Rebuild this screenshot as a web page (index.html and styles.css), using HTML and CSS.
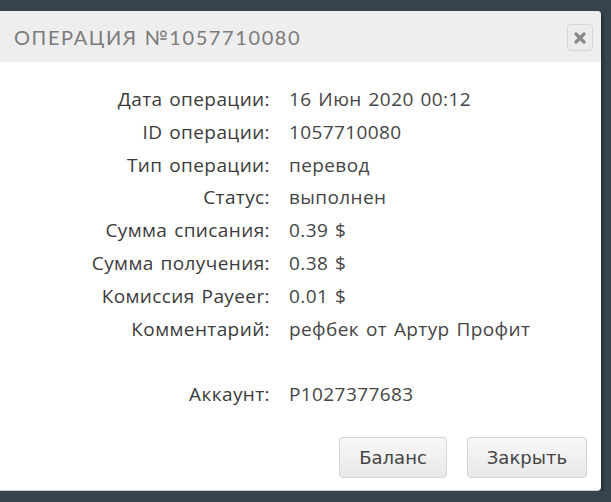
FILE: index.html
```html
<!DOCTYPE html>
<html lang="ru">
<head>
  <meta charset="UTF-8">
  <title>Операция</title>
  <link rel="stylesheet" href="styles.css">
</head>
<body>
  <div class="dialog">
    <div class="dialog-head">
      <span class="dialog-title">Операция №1057710080</span>
      <button class="close" type="button" aria-label="Закрыть">
        <svg width="12" height="12" viewBox="0 0 12 12">
          <path d="M2 2 L10 10 M10 2 L2 10" stroke="#8a8a8a" stroke-width="3.2" stroke-linecap="round"/>
        </svg>
      </button>
    </div>
    <div class="dialog-body">
      <div class="info">
        <div class="label">Дата операции:</div><div class="value">16 Июн 2020 00:12</div>
        <div class="label">ID операции:</div><div class="value">1057710080</div>
        <div class="label">Тип операции:</div><div class="value">перевод</div>
        <div class="label">Статус:</div><div class="value">выполнен</div>
        <div class="label">Сумма списания:</div><div class="value">0.39 $</div>
        <div class="label">Сумма получения:</div><div class="value">0.38 $</div>
        <div class="label">Комиссия Payeer:</div><div class="value">0.01 $</div>
        <div class="label">Комментарий:</div><div class="value">рефбек от Артур Профит</div>
        <div class="label">&nbsp;</div><div class="value">&nbsp;</div>
        <div class="label">Аккаунт:</div><div class="value">P1027377683</div>
      </div>
      <div class="actions">
        <button class="btn" type="button">Баланс</button>
        <button class="btn" type="button">Закрыть</button>
      </div>
    </div>
  </div>
</body>
</html>
```

FILE: styles.css
```css
/* Page */
body {
  margin: 0;
  padding: 11px 0 0;
  background: #36444d;
  font-family: "Open Sans", sans-serif;
  overflow: hidden;
}

.dialog {
  width: 611px;
  margin-left: -10px;
  background: #fff;
  border-radius: 4px;
  border-bottom: 1px solid #c8d0d4;
  box-shadow: 2px 2px 3px rgba(0, 0, 0, 0.35);
  overflow: hidden;
}

/* Header */
.dialog-head {
  height: 51px;
  background: #eeeeee;
  display: flex;
  align-items: center;
  justify-content: space-between;
  padding: 0 8px 0 24px;
}

.dialog-title {
  font-family: "Lato", sans-serif;
  font-size: 20px;
  letter-spacing: 1.6px;
  text-transform: uppercase;
  color: #7b7b7b;
}

.close {
  width: 26px;
  height: 27px;
  margin-top: 2px;
  padding: 0;
  border: 1px solid #d6d6d6;
  border-radius: 4px;
  background: #ececec;
  display: flex;
  align-items: center;
  justify-content: center;
}

/* Body */
.dialog-body {
  padding: 21px 14px 12px 0;
}

.info {
  display: grid;
  grid-template-columns: 280px 1fr;
  column-gap: 19px;
  font-size: 19px;
  letter-spacing: 0.4px;
  word-spacing: 1.5px;
  line-height: 32.8px;
  color: #3b3b3b;
}

.label {
  text-align: right;
}

.value {
  color: #454545;
}

.actions {
  display: flex;
  justify-content: flex-end;
  gap: 20px;
  margin-top: 26px;
}

.btn {
  height: 41px;
  padding: 0 19px;
  font-family: "DejaVu Sans", sans-serif;
  font-size: 18px;
  color: #444;
  border: 1px solid #d4d4d4;
  border-radius: 4px;
  background: linear-gradient(#f8f8f8, #e8e8e8);
}
```
